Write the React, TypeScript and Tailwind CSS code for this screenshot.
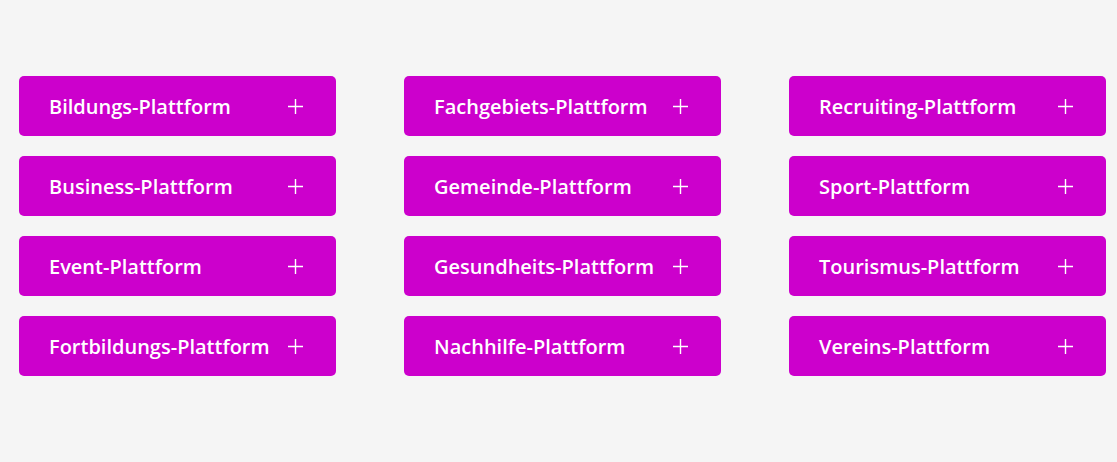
import React from "react";

const columns = [
  ["Bildungs-Plattform", "Business-Plattform", "Event-Plattform", "Fortbildungs-Plattform"],
  ["Fachgebiets-Plattform", "Gemeinde-Plattform", "Gesundheits-Plattform", "Nachhilfe-Plattform"],
  ["Recruiting-Plattform", "Sport-Plattform", "Tourismus-Plattform", "Vereins-Plattform"],
];

const PlusIcon = () => (
  <svg width="15" height="15" viewBox="0 0 15 15" className="flex-shrink-0">
    <path d="M7.5 0v15M0 7.5h15" stroke="#fff" strokeWidth="1.4" fill="none" />
  </svg>
);

const Toggle = ({ label }: { label: string }) => (
  <button className="flex h-[60px] w-full items-center justify-between rounded-[5px] bg-[#cc00cc] pl-[30px] pr-[33px] text-left">
    <span className="pt-[1px] text-[20px] font-semibold text-white">{label}</span>
    <PlusIcon />
  </button>
);

export default function App() {
  return (
    <div className="min-h-[462px] bg-[#f5f5f5] px-[19px] pt-[76px] font-['Open_Sans',sans-serif]">
      <div className="grid w-[1087px] grid-cols-3 gap-x-[68px]">
        {columns.map((col, i) => (
          <div key={i} className="flex flex-col gap-5">
            {col.map((label) => (
              <Toggle key={label} label={label} />
            ))}
          </div>
        ))}
      </div>
    </div>
  );
}
